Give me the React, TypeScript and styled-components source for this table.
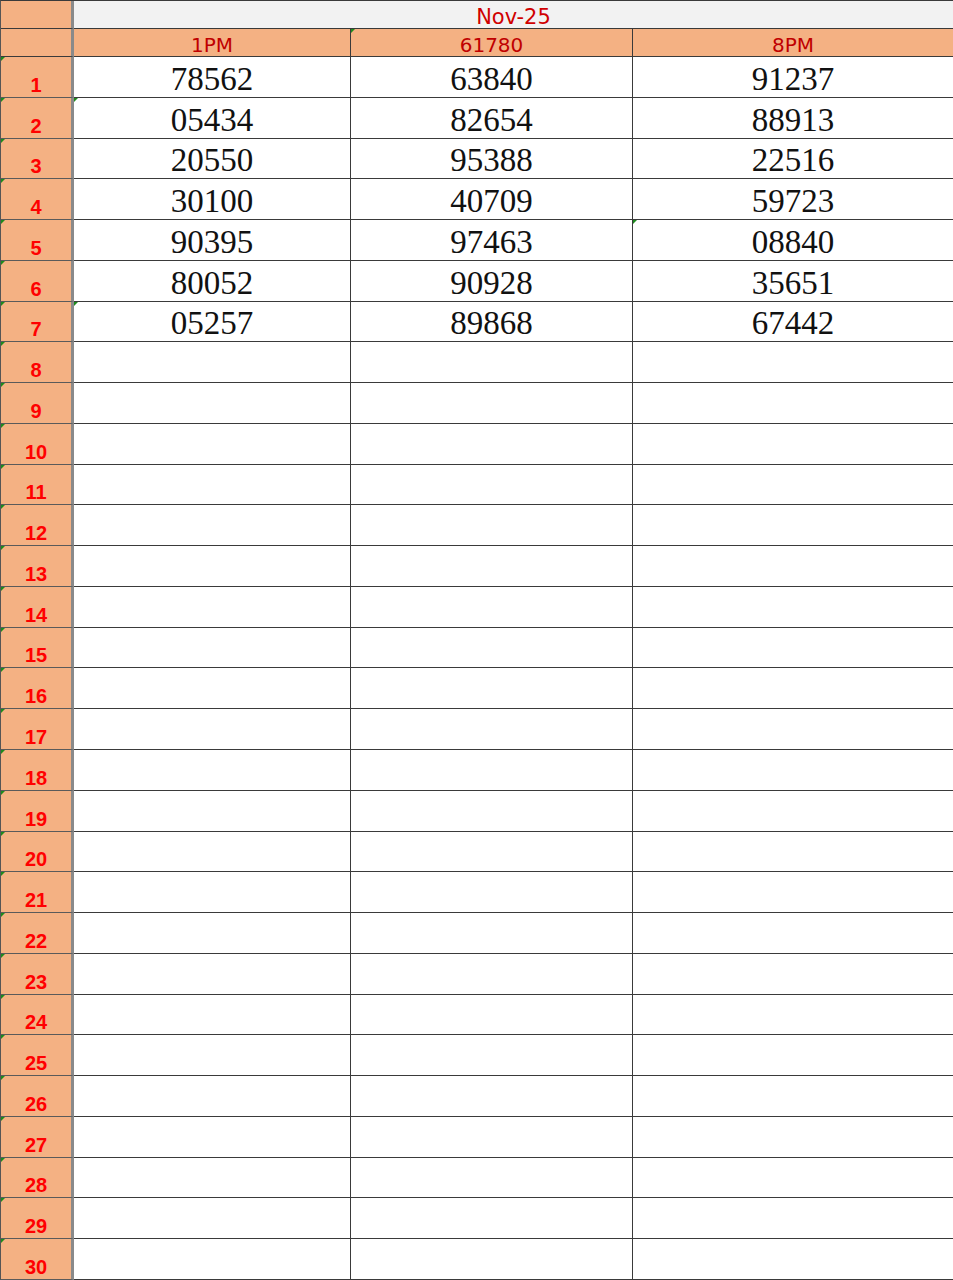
import styled, { createGlobalStyle, css } from "styled-components";

const GlobalStyle = createGlobalStyle`
  html, body {
    margin: 0;
    padding: 0;
    background: #fff;
  }
`;

const ORANGE = "#f4b183";
const LINE = "#3a3a3a";

const Sheet = styled.div`
  display: grid;
  grid-template-columns: 73px 277px 282px 321px;
  grid-template-rows: 28px 28px repeat(30, 1fr);
  width: 953px;
  height: 1280px;
  box-sizing: border-box;
  border-top: 1px solid ${LINE};
  border-left: 1px solid #555;
  overflow: hidden;
`;

const flagMark = css`
  &::before {
    content: "";
    position: absolute;
    top: 0;
    left: 0;
    border-top: 4px solid #1e8a1e;
    border-right: 4px solid transparent;
  }
`;

const Cell = styled.div<{ $flag?: boolean }>`
  position: relative;
  box-sizing: border-box;
  border-right: 1px solid ${LINE};
  border-bottom: 1px solid ${LINE};
  display: flex;
  justify-content: center;
  min-width: 0;
  ${(p) => p.$flag && flagMark}
`;

const Corner = styled(Cell)`
  background: ${ORANGE};
  border-right: 3px solid #8a8a8a;
`;

const TitleCell = styled(Cell)`
  grid-column: span 3;
  background: #f2f2f2;
  align-items: center;
  padding-top: 4px;
  color: #d00000;
  font-family: "DejaVu Sans", Verdana, sans-serif;
  font-size: 21px;
`;

const HeaderCell = styled(Cell)`
  background: ${ORANGE};
  align-items: center;
  padding-top: 5px;
  color: #c00000;
  font-family: "DejaVu Sans", Verdana, sans-serif;
  font-size: 20px;
`;

const RowLabel = styled(Cell)`
  background: ${ORANGE};
  border-right: 3px solid #8a8a8a;
  border-bottom-color: #5a5a5a;
  align-items: flex-end;
  padding-bottom: 1px;
  line-height: 22px;
  color: #ff0000;
  font-family: "Liberation Sans", Arial, sans-serif;
  font-weight: bold;
  font-size: 20px;
`;

const DataCell = styled(Cell)`
  align-items: center;
  padding-top: 5px;
  color: #111;
  font-family: "Liberation Serif", "Times New Roman", serif;
  font-size: 33px;
  line-height: 1;
`;

const results: string[][] = [
  ["78562", "63840", "91237"],
  ["05434", "82654", "88913"],
  ["20550", "95388", "22516"],
  ["30100", "40709", "59723"],
  ["90395", "97463", "08840"],
  ["80052", "90928", "35651"],
  ["05257", "89868", "67442"],
];

const headers = ["1PM", "61780", "8PM"];

// cells that carry the little green corner marker: "row-col"
const flagged = new Set(["2-0", "5-2", "7-0"]);

export default function App() {
  const rows = Array.from({ length: 30 }, (_, i) => i + 1);
  return (
    <>
      <GlobalStyle />
      <Sheet>
        <Corner />
        <TitleCell>Nov-25</TitleCell>
        <Corner />
        {headers.map((h, i) => (
          <HeaderCell key={h} $flag={i === 1}>
            {h}
          </HeaderCell>
        ))}
        {rows.map((n) => (
          <Row key={n} n={n} values={results[n - 1]} />
        ))}
      </Sheet>
    </>
  );
}

function Row({ n, values }: { n: number; values?: string[] }) {
  return (
    <>
      <RowLabel $flag>{n}</RowLabel>
      {[0, 1, 2].map((c) => (
        <DataCell key={c} $flag={flagged.has(`${n}-${c}`)}>
          {values ? values[c] : ""}
        </DataCell>
      ))}
    </>
  );
}
